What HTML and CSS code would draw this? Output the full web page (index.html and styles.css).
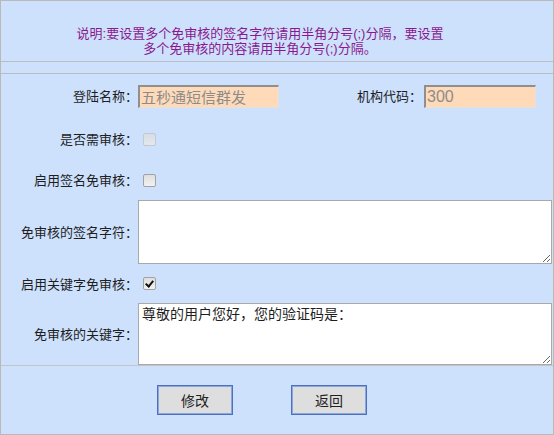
FILE: index.html
```html
<!DOCTYPE html>
<html lang="zh-CN">
<head>
<meta charset="utf-8">
<title>免审核设置</title>
<link rel="stylesheet" href="styles.css">
</head>
<body>
<div class="panel">
  <div class="notice">
    <p class="notice-text">说明:要设置多个免审核的签名字符请用半角分号(;)分隔，要设置<br>多个免审核的内容请用半角分号(;)分隔。</p>
  </div>
  <div class="spacer"></div>
  <form class="form">
    <div class="row row-1">
      <label class="lbl">登陆名称：</label>
      <input class="field field-name" type="text" value="五秒通短信群发" disabled>
      <label class="lbl lbl-code">机构代码：</label>
      <input class="field field-code" type="text" value="300" disabled>
    </div>
    <div class="row row-2">
      <label class="lbl">是否需审核：</label>
      <input class="cb" type="checkbox" disabled>
    </div>
    <div class="row row-3">
      <label class="lbl">启用签名免审核：</label>
      <input class="cb" type="checkbox">
    </div>
    <div class="row row-ta">
      <label class="lbl">免审核的签名字符：</label>
      <textarea class="ta"></textarea>
    </div>
    <div class="row row-5">
      <label class="lbl">启用关键字免审核：</label>
      <input class="cb" type="checkbox" checked>
    </div>
    <div class="row row-ta row-ta2">
      <label class="lbl">免审核的关键字：</label>
      <textarea class="ta">尊敬的用户您好，您的验证码是：</textarea>
    </div>
  </form>
  <div class="actions">
    <button class="btn" type="button">修改</button>
    <button class="btn" type="button">返回</button>
  </div>
</div>
</body>
</html>
```
FILE: styles.css
```css
* { box-sizing: border-box; }
html, body { margin: 0; padding: 0; }
body {
  font-family: "Noto Sans CJK SC", "Liberation Sans", sans-serif;
  font-size: 13px;
  color: #1e1e1e;
  background: #ffffff;
}
.panel {
  width: 554px;
  height: 435px;
  border: 1px solid #b9b9b9;
  background: #cde1fd;
  display: flex;
  flex-direction: column;
}
.notice {
  height: 61px;
  border-bottom: 1px solid #bdbdbd;
  padding-top: 25px;
}
.notice-text {
  margin: 0 0 0 57px;
  width: 404px;
  text-align: center;
  color: #8a1a8c;
  font-family: "Liberation Sans", "Noto Sans CJK SC", sans-serif;
  font-size: 13px;
  line-height: 15px;
}
.spacer {
  height: 12px;
  border-bottom: 1px solid #bdbdbd;
}
.form {
  margin: 0;
  height: 292px;
  border-bottom: 1px solid #c4c4c4;
  display: flex;
  flex-direction: column;
}
.row {
  display: flex;
  align-items: center;
}
.row-1 { height: 44px; }
.row-2 { height: 42px; }
.row-3 { height: 40px; }
.row-5 { height: 39px; }
.row-ta { height: 64px; }
.row-ta2 { height: 62px; }
.lbl {
  width: 137px;
  flex: none;
  text-align: right;
  white-space: nowrap;
  line-height: 16px;
}
.field {
  height: 23px;
  margin: 0;
  padding: 0 1px;
  background: #ffdab9;
  color: #8c8c8c;
  font-family: "Noto Sans CJK SC", "Liberation Sans", sans-serif;
  font-size: 15px;
  border-style: solid;
  border-width: 2px 1px 1px 2px;
  border-color: #8f8f8f #e2e2e2 #e2e2e2 #8f8f8f;
}
.field-name { width: 141px; }
.lbl-code {
  width: auto;
  flex: 1;
  padding-right: 2px;
}
.field-code {
  width: 112px;
  margin-right: 17px;
  font-family: "Liberation Sans", "Noto Sans CJK SC", sans-serif;
  font-size: 16px;
}
.cb {
  -webkit-appearance: none;
  appearance: none;
  width: 13px;
  height: 13px;
  margin: 0 0 0 5px;
  border: 1px solid #a2a2a2;
  border-radius: 2px;
  background: linear-gradient(#dedede, #f2f2f2);
  position: relative;
}
.cb:disabled {
  border-color: #c4c8cf;
  background: linear-gradient(#d8dde4, #e4e8ee);
}
.cb:checked::after {
  content: "";
  position: absolute;
  left: 3px;
  top: 1px;
  width: 3px;
  height: 6px;
  border: solid #111;
  border-width: 0 2px 2px 0;
  transform: rotate(40deg);
}
.ta {
  width: 414px;
  height: 100%;
  margin: 0;
  padding: 1px 3px;
  border: 1px solid #a9a9a9;
  background: #ffffff;
  font-family: "Noto Sans CJK SC", "Liberation Sans", sans-serif;
  font-size: 14px;
  line-height: 17px;
  color: #1e1e1e;
  resize: both;
}
.actions {
  flex: 1;
  display: flex;
  align-items: center;
  gap: 58px;
  padding-left: 156px;
}
.btn {
  width: 76px;
  height: 30px;
  margin: 0;
  padding: 0;
  background: #dedede;
  border: 1px solid #4b72c0;
  box-shadow: inset 0 0 0 1px #8aa6dc;
  font-family: "Noto Sans CJK SC", "Liberation Sans", sans-serif;
  font-size: 14px;
  color: #222;
}
```
